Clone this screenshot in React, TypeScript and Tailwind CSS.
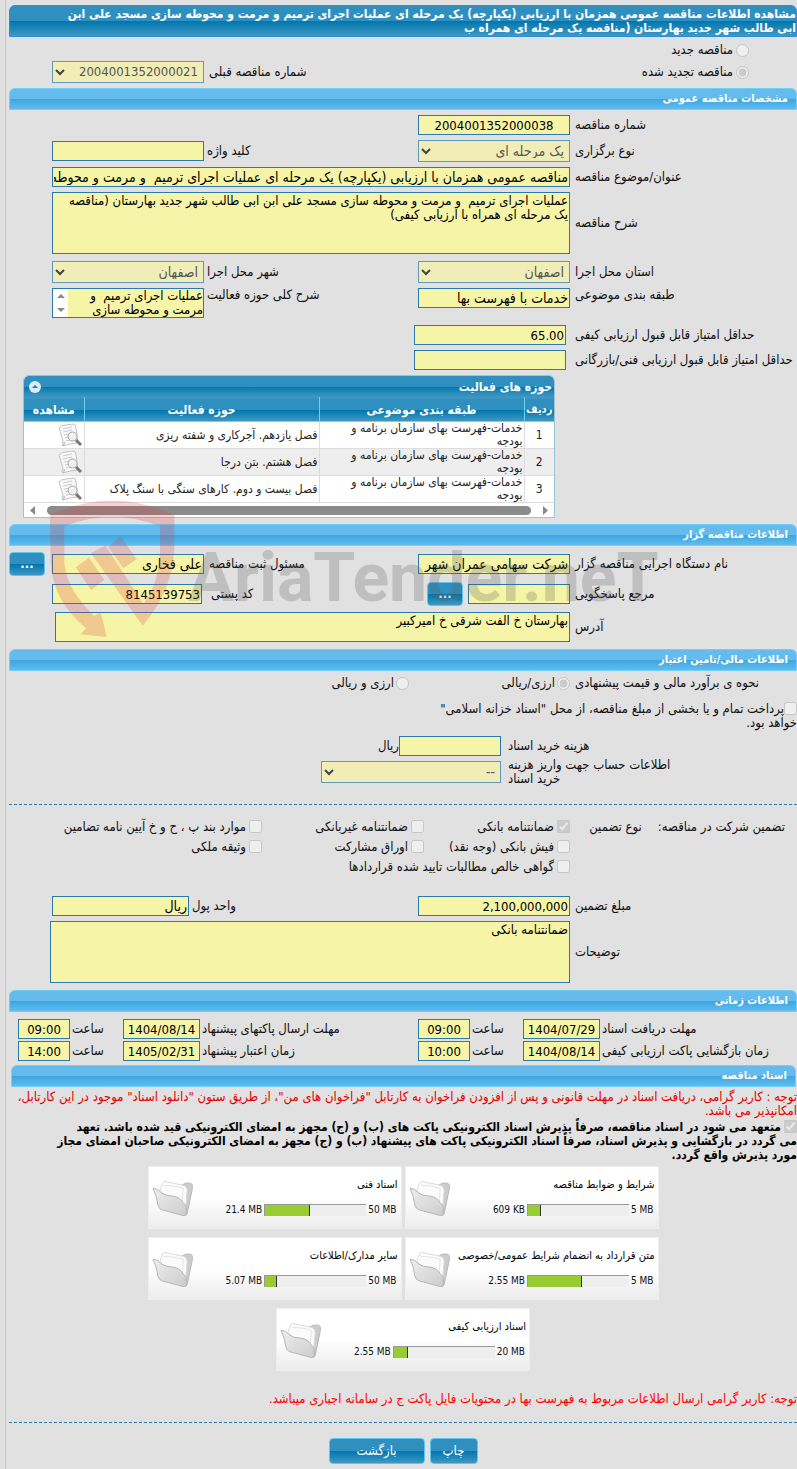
import type { ReactNode } from "react";
import clsx from "clsx";

const inputCls = "block h-5 w-full min-w-0 rounded-none border border-[#2a7aad] bg-[#f6f4a6] px-px py-0 text-black outline-none"
const fieldCls = clsx(inputCls, "text-[13px]")
const textFieldCls = clsx(inputCls, "text-[14px]")
const areaCls = "block w-full min-w-0 resize-none overflow-hidden rounded-none border border-[#2a7aad] bg-[#f6f4a6] px-px py-px text-[13px] leading-[14px] text-black outline-none"
const darkCls = "bg-[linear-gradient(#2f90bf_0%,#2f90bf_50%,#0076ae_50%,#3f98c2_100%)]"
const rowCls = "grid grid-cols-[227px_152px_1fr_152px_43px] items-center"

const activities = [
    { id: 1, activity: "فصل یازدهم. آجرکاری و شفته ریزی" },
    { id: 2, activity: "فصل هشتم. بتن درجا" },
    { id: 3, activity: "فصل بیست و دوم. کارهای سنگی با سنگ پلاک" },
]

const documents = [
    { title: "شرایط و ضوابط مناقصه", used: "609 KB", total: "5 MB", percent: 13 },
    { title: "اسناد فنی", used: "21.4 MB", total: "50 MB", percent: 44 },
    { title: "متن قرارداد به انضمام شرایط عمومی/خصوصی", used: "2.55 MB", total: "5 MB", percent: 53 },
    { title: "سایر مدارک/اطلاعات", used: "5.07 MB", total: "50 MB", percent: 12 },
    { title: "اسناد ارزیابی کیفی", used: "2.55 MB", total: "20 MB", percent: 14 },
]

function SectionTitle({ children, className }: { children: ReactNode, className?: string }) {
    return (
        <h2 className={clsx("h-[22px] rounded-t-md border border-[#6fd0fa] bg-[linear-gradient(#65bbeb_0%,#65bbeb_50%,#3aa7e1_50%,#62bbee_100%)] px-2 text-[11px] font-bold leading-5 text-white", className)}>
            {children}
        </h2>
    )
}

function Label({ htmlFor, children, className }: { htmlFor: string, children: ReactNode, className?: string }) {
    return (
        <label htmlFor={htmlFor} className={clsx("whitespace-nowrap text-left", className || "pl-[5px]")}>{children}</label>
    )
}

function SelectBox({ id, value, className }: { id: string, value: string, className?: string }) {
    return (
        <div className={clsx("relative", className || "text-[14px]")}>
            <select id={id} disabled className="block h-[22px] w-full appearance-none rounded-none border border-[#6199b9] bg-[#f0eeb6] pr-[5px] pl-5 py-0 text-[#555] opacity-100">
                <option>{value}</option>
            </select>
            <svg className="pointer-events-none absolute left-[3px] top-[7px]" width="10" height="8" viewBox="0 0 10 8" fill="none" stroke="#444" strokeWidth="2">
                <path d="M1 2l4 4 4-4" />
            </svg>
        </div>
    )
}

function BlueButton({ children, className, label }: { children: ReactNode, className?: string, label?: string }) {
    return (
        <button type="button" aria-label={label} className={clsx("rounded border border-[#5cc5f0] text-[13px] text-white", darkCls, className)}>
            {children}
        </button>
    )
}

function Check({ id, children, checked }: { id: string, children: ReactNode, checked?: boolean }) {
    return (
        <div className="flex h-5 items-start gap-[3px] whitespace-nowrap">
            <input id={id} type="checkbox" disabled defaultChecked={checked} className="m-0 size-[13px]" />
            <label htmlFor={id}>{children}</label>
        </div>
    )
}

function ViewIcon() {
    return (
        <svg width="24" height="24" viewBox="0 0 24 24" fill="none">
            <path d="M1 5Q3 2 8 2L15 1q3 0 3 4l2 15Q14 20 5 23Q3 21 5 18Z" fill="#f8f8f8" stroke="#c2c2c2" />
            <path d="M5 6l9-2M5 9l9-2M6 12l5-1M7 15l3-1M8 18l5-1" stroke="#ccc" />
            <path d="M5 23q2-2 1-4" stroke="#aaa" />
            <circle cx="14.5" cy="13.5" r="4.500" fill="#eee" stroke="#a8a8a8" />
            <path d="M12 13q1-2 3-2" stroke="#fff" />
            <path d="M18 17l5 5" stroke="#777" strokeWidth="3" />
        </svg>
    )
}

function FolderIcon() {
    return (
        <svg width="42" height="38" viewBox="-1 0 43 38">
            <defs>
                <linearGradient id="front" x1="0" y1="0" x2="1" y2="1">
                    <stop offset="0" stopColor="#eee" />
                    <stop offset="1" stopColor="#cdcdcd" />
                </linearGradient>
            </defs>
            <path d="M29 6l4-2q6-1 7 1 1 3 0 6L35 35l-2 2z" fill="#ccc" stroke="#b8b8b8" />
            <path d="M7 11L10 3q1-1 2-1l19 4q4 1 4 5l-2 24-10-8z" fill="#fbfbfb" stroke="#dadada" />
            <path d="M11 6q10 0 20 3l-1 13" fill="none" stroke="#e4e4e4" />
            <path d="M0 9q5 0 9 5 4 3 11 3 8 1 11 7 3 2 3 5v7q-1 1-3 1L9 31q-3-1-4-5Q4 17 0 9z" fill="url(#front)" stroke="#b4b4b4" />
        </svg>
    )
}

function Watermark() {
    return (
        <svg aria-hidden="true" className="pointer-events-none absolute -top-6 left-[41px]" width="610" height="140" viewBox="150 0 1830 420">
            <g fill="rgb(215,60,65)" fillOpacity="0.23">
                <path fillRule="evenodd" d="M150 45Q336-42 523 45V140Q520 270 428 377L273 160l43-24L430 312Q480 245 480 150V78Q336 24 193 78V190Q200 270 283 348L302 335l18 76-78-8 16-18Q155 300 152 180Z" />
                <path d="M324 140l38-32 48 70-40 27zM227 202l40-29 46 67-40 30z" />
            </g>
            <text direction="ltr" x="565" y="303" fill="rgb(90,90,90)" fillOpacity="0.25" fontFamily="Roboto, sans-serif" fontWeight="700" fontSize="204">AriaTender.neT</text>
        </svg>
    )
}

function ActivityTable() {
    return (
        <div className="mt-[5px] mr-[242px] ml-3.5 overflow-hidden rounded-t-md border border-[#9cc3dc] bg-white text-[12px] text-[#222]">
            <div className={clsx("flex h-[21px] items-center justify-between pr-0.5 pl-[5px] font-bold text-white", darkCls)}>
                <span>حوزه های فعالیت</span>
                <button type="button" aria-label="بستن" className="flex size-3 items-center justify-center rounded-full bg-[#dcebfa]">
                    <svg width="8" height="5" viewBox="0 0 8 5"><path d="M1 4l3-3 3 3z" fill="#1c7bb0" /></svg>
                </button>
            </div>
            <table className="w-full table-fixed border-collapse">
                <thead>
                    <tr className={clsx("h-6 border-t border-b border-t-[#3f8fd0] border-b-[#6fd0fa] text-white", darkCls)}>
                        <th className="w-[30px] border-l border-[#6fd0fa] p-0 text-[11px]">ردیف</th>
                        <th className="w-[205px] border-l border-[#6fd0fa] p-0">طبقه بندی موضوعی</th>
                        <th className="border-l border-[#6fd0fa] p-0">حوزه فعالیت</th>
                        <th className="w-[60px] p-0">مشاهده</th>
                    </tr>
                </thead>
                <tbody>
                    {activities.map((item) => (
                        <tr key={item.id} className="h-[27px] border-b border-[#ddd] even:bg-[#eee]">
                            <td className="border-l border-[#ddd] p-0 text-center">{item.id}</td>
                            <td className="border-l border-[#ddd] p-0 pr-px leading-[13px]">خدمات-فهرست بهای سازمان برنامه و<br />بودجه</td>
                            <td className="border-l border-[#ddd] p-0 pr-px leading-[13px]">{item.activity}</td>
                            <td className="p-0 pr-0.5"><ViewIcon /></td>
                        </tr>
                    ))}
                </tbody>
            </table>
            <div className="flex h-3.5 items-center justify-between px-1.5">
                <svg width="5" height="9" viewBox="0 0 5 9"><path d="M0 0l5 4.500-5 4.500z" fill="#888" /></svg>
                <div className="mx-3 h-[9px] flex-1 rounded-full bg-[#8b8b8b]"></div>
                <svg width="5" height="9" viewBox="0 0 5 9"><path d="M5 0L0 4.500 5 9z" fill="#888" /></svg>
            </div>
        </div>
    )
}

function DocumentCard({ title, used, total, percent }: { title: string, used: string, total: string, percent: number }) {
    return (
        <div className="flex h-[63px] w-[254px] items-center justify-between border border-[#eee] bg-linear-to-b from-white from-50% to-[#ececec] pr-[3px] pl-[3px]">
            <div className="flex w-0 flex-col gap-[11px] whitespace-nowrap text-[10px]">
                <a href="#" className="text-[11px] text-black">{title}</a>
                <div className="flex items-center gap-0.5">
                    <span dir="ltr" className="pr-px">{total}</span>
                    <div className="flex h-3 w-[102px] shrink-0 justify-end border-t border-l border-[#999] bg-[#eee]">
                        <div className="h-full border-r border-[#333] bg-[#9c3]" style={{ width: `${percent}%` }}></div>
                    </div>
                    <span dir="ltr">{used}</span>
                </div>
            </div>
            <FolderIcon />
        </div>
    )
}

export default function App() {
    return (
        <div dir="rtl" className="min-h-screen overflow-hidden bg-[#e1e1e1] pl-[5px] font-['DejaVu_Sans_Condensed','DejaVu_Sans',sans-serif] text-[13px] leading-[14px] text-[#111]">
            <main className="min-h-screen border-l border-[#c8c8c8] pt-[5px] pb-[5px] pl-[3px]">
                <h1 className={clsx("h-8 rounded-t-md border border-[#2b8fdc] py-px text-[12px] font-bold leading-[14px] text-white whitespace-nowrap", darkCls)}>
                    مشاهده اطلاعات مناقصه عمومی همزمان با ارزیابی (یکپارچه) یک مرحله ای عملیات اجرای ترمیم و مرمت و محوطه سازی مسجد علی ابن<br />
                    ابی طالب شهر جدید بهارستان (مناقصه یک مرحله ای همراه ب
                </h1>

                <div className="mt-1.5 flex items-center gap-[3px] pr-12">
                    <input id="new" name="kind" type="radio" disabled className="m-0 size-[13px]" />
                    <label htmlFor="new">مناقصه جدید</label>
                </div>
                <div className={clsx("mt-1", rowCls)}>
                    <div className="flex items-center gap-[3px] pr-12">
                        <input id="renewed" name="kind" type="radio" disabled defaultChecked className="m-0 size-[13px]" />
                        <label htmlFor="renewed">مناقصه تجدید شده</label>
                    </div>
                    <span></span>
                    <Label htmlFor="prev">شماره مناقصه قبلی</Label>
                    <SelectBox id="prev" value="2004001352000021" className="text-[13px]" />
                </div>

                <SectionTitle className="mt-[5px]">مشخصات مناقصه عمومی</SectionTitle>
                <div className="flex flex-col gap-[5px] pt-[5px]">
                    <div className={rowCls}>
                        <Label htmlFor="number">شماره مناقصه</Label>
                        <input id="number" readOnly defaultValue="2004001352000038" className={clsx(fieldCls, "text-center")} />
                    </div>
                    <div className={rowCls}>
                        <Label htmlFor="type">نوع برگزاری</Label>
                        <SelectBox id="type" value="یک مرحله ای" />
                        <Label htmlFor="keyword" className="pl-[3px]">کلید واژه</Label>
                        <input id="keyword" readOnly className={fieldCls} />
                    </div>
                    <div className={rowCls}>
                        <Label htmlFor="subject">عنوان/موضوع مناقصه</Label>
                        <input id="subject" readOnly defaultValue="مناقصه عمومی همزمان با ارزیابی (یکپارچه) یک مرحله ای عملیات اجرای ترمیم  و مرمت و محوطه سازی مسجد" className={clsx(textFieldCls, "col-span-3")} />
                    </div>
                    <div className={rowCls}>
                        <Label htmlFor="desc">شرح مناقصه</Label>
                        <textarea id="desc" readOnly className={clsx(areaCls, "col-span-3 h-[62px]")} defaultValue={"عملیات اجرای ترمیم  و مرمت و محوطه سازی مسجد علی ابن ابی طالب شهر جدید بهارستان (مناقصه\nیک مرحله ای همراه با ارزیابی کیفی)"} />
                    </div>
                    <div className={clsx(rowCls, "mt-0.5")}>
                        <Label htmlFor="province">استان محل اجرا</Label>
                        <SelectBox id="province" value="اصفهان" />
                        <Label htmlFor="city" className="pl-[3px]">شهر محل اجرا</Label>
                        <SelectBox id="city" value="اصفهان" />
                    </div>
                    <div className="grid grid-cols-[227px_152px_1fr_152px_43px] items-start">
                        <Label htmlFor="category">طبقه بندی موضوعی</Label>
                        <input id="category" readOnly defaultValue="خدمات با فهرست بها" className={textFieldCls} />
                        <Label htmlFor="scope" className="pl-[3px]">شرح کلی حوزه فعالیت</Label>
                        <div className="flex h-[30px] border border-[#2a7aad] bg-[#f6f4a6]">
                            <textarea id="scope" readOnly className="block min-w-0 flex-1 resize-none overflow-hidden p-0 text-[13px] leading-[14px] text-black outline-none whitespace-pre" defaultValue={"عملیات اجرای ترمیم  و\nمرمت و محوطه سازی"} />
                            <div className="flex w-[15px] flex-col items-center justify-between bg-white py-[5px]">
                                <svg width="8" height="4" viewBox="0 0 8 4"><path d="M0 4l4-4 4 4z" fill="#888" /></svg>
                                <svg width="8" height="4" viewBox="0 0 8 4"><path d="M0 0l4 4 4-4z" fill="#888" /></svg>
                            </div>
                        </div>
                    </div>
                    <div className="mt-0.5 flex items-center">
                        <Label htmlFor="quality" className="w-[231px] pl-[9px]">حداقل امتیاز قابل قبول ارزیابی کیفی</Label>
                        <div className="w-[152px]"><input id="quality" readOnly defaultValue="65.00" className={fieldCls} /></div>
                    </div>
                    <div className="flex items-center">
                        <Label htmlFor="technical" className="w-[231px] pl-[9px]">حداقل امتیاز قابل قبول ارزیابی فنی/بازرگانی</Label>
                        <div className="w-[152px]"><input id="technical" readOnly className={fieldCls} /></div>
                    </div>
                </div>

                <ActivityTable />

                <section className="relative mt-1.5">
                    <SectionTitle>اطلاعات مناقصه گزار</SectionTitle>
                    <div className="flex flex-col gap-1.5 pt-1.5">
                        <div className={rowCls}>
                            <Label htmlFor="org">نام دستگاه اجرایی مناقصه گزار</Label>
                            <input id="org" readOnly defaultValue="شرکت سهامی عمران شهر جدید بهارستان" className={textFieldCls} />
                            <Label htmlFor="registrar">مسئول ثبت مناقصه</Label>
                            <input id="registrar" readOnly defaultValue="علی فخاری" className={textFieldCls} />
                            <BlueButton label="انتخاب مسئول" className="mr-[7px] h-6 w-9 font-bold">...</BlueButton>
                        </div>
                        <div className={rowCls}>
                            <Label htmlFor="contact">مرجع پاسخگویی</Label>
                            <div className="flex items-center gap-[5px]">
                                <div className="w-[102px]"><input id="contact" readOnly className={fieldCls} /></div>
                                <BlueButton label="انتخاب مرجع" className="h-6 w-9 font-bold">...</BlueButton>
                            </div>
                            <Label htmlFor="postal" className="pl-[7px]">کد پستی</Label>
                            <div className="pr-0.5"><input id="postal" readOnly defaultValue="8145139753" className={fieldCls} /></div>
                        </div>
                        <div className={rowCls}>
                            <Label htmlFor="address">آدرس</Label>
                            <div className="col-span-3 pl-[3px]">
                                <textarea id="address" readOnly className={clsx(areaCls, "h-[30px]")} defaultValue="بهارستان خ الفت شرقی خ امیرکبیر" />
                            </div>
                        </div>
                    </div>
                    <Watermark />
                </section>

                <SectionTitle className="mt-[7px]">اطلاعات مالی/تامین اعتبار</SectionTitle>
                <div className="flex items-center pt-[5px]">
                    <span className="w-[227px] pl-[5px] text-left whitespace-nowrap">نحوه ی برآورد مالی و قیمت پیشنهادی</span>
                    <div className="flex w-[161px] items-center gap-0.5">
                        <input id="rial" name="currency" type="radio" disabled defaultChecked className="m-0 size-[13px]" />
                        <label htmlFor="rial">ارزی/ریالی</label>
                    </div>
                    <div className="flex items-center gap-0.5">
                        <input id="both" name="currency" type="radio" disabled className="m-0 size-[13px]" />
                        <label htmlFor="both">ارزی و ریالی</label>
                    </div>
                </div>
                <div className="mt-3 w-[372px]">
                    <input id="treasury" type="checkbox" disabled className="m-0 size-[13px] align-top" />
                    <label htmlFor="treasury">پرداخت تمام و یا بخشی از مبلغ مناقصه، از محل "اسناد خزانه اسلامی" خواهد بود.</label>
                </div>
                <div className="mt-1.5 flex items-center">
                    <Label htmlFor="cost" className="w-[296px] pl-[7px]">هزینه خرید اسناد</Label>
                    <div className="w-[102px]"><input id="cost" readOnly className={fieldCls} /></div>
                    <span>ریال</span>
                </div>
                <div className="mt-0.5 flex items-center">
                    <div className="flex w-[296px] justify-end pl-[7px]">
                        <label htmlFor="account" className="whitespace-nowrap text-left">اطلاعات حساب جهت واریز هزینه<br />خرید اسناد</label>
                    </div>
                    <SelectBox id="account" value="--" className="w-[180px] text-[14px]" />
                </div>

                <hr className="mt-[18px] border-t border-dashed border-[#2a7aad]" />
                <div className="mt-[15px] grid grid-cols-[227px_146px_162px_1fr]">
                    <div className="flex gap-4 pr-3 whitespace-nowrap">
                        <span>تضمین شرکت در مناقصه:</span>
                        <span>نوع تضمین</span>
                    </div>
                    <Check id="g1" checked>ضمانتنامه بانکی</Check>
                    <Check id="g2">ضمانتنامه غیربانکی</Check>
                    <Check id="g3">موارد بند پ ، ح و خ آیین نامه تضامین</Check>
                    <div className="col-start-2"><Check id="g4">فیش بانکی (وجه نقد)</Check></div>
                    <Check id="g5">اوراق مشارکت</Check>
                    <Check id="g6">وثیقه ملکی</Check>
                    <div className="col-start-2"><Check id="g7">گواهی خالص مطالبات تایید شده قراردادها</Check></div>
                </div>
                <div className="mt-4 flex flex-col gap-[5px]">
                    <div className="grid grid-cols-[227px_152px_1fr_137px_43px] items-center">
                        <Label htmlFor="amount">مبلغ تضمین</Label>
                        <input id="amount" readOnly defaultValue="2,100,000,000" className={fieldCls} />
                        <Label htmlFor="unit" className="pl-[3px]">واحد پول</Label>
                        <input id="unit" readOnly defaultValue="ریال" className={textFieldCls} />
                    </div>
                    <div className="grid grid-cols-[227px_1fr_41px] items-center">
                        <Label htmlFor="notes">توضیحات</Label>
                        <textarea id="notes" readOnly className={clsx(areaCls, "h-[62px]")} defaultValue="ضمانتنامه بانکی" />
                    </div>
                </div>

                <SectionTitle className="mt-[7px]">اطلاعات زمانی</SectionTitle>
                <div className="mt-[7px] grid grid-cols-[197px_77px_53px_52px_1fr_77px_53px_52px_9px] items-center gap-y-0.5">
                    <Label htmlFor="d1" className="pl-0.5">مهلت دریافت اسناد</Label>
                    <input id="d1" readOnly defaultValue="1404/07/29" className={clsx(fieldCls, "text-center")} />
                    <Label htmlFor="t1" className="pl-0.5">ساعت</Label>
                    <input id="t1" readOnly defaultValue="09:00" className={clsx(fieldCls, "text-center")} />
                    <Label htmlFor="d2" className="pl-0.5">مهلت ارسال پاکتهای پیشنهاد</Label>
                    <input id="d2" readOnly defaultValue="1404/08/14" className={clsx(fieldCls, "text-center")} />
                    <Label htmlFor="t2" className="pl-0.5">ساعت</Label>
                    <input id="t2" readOnly defaultValue="09:00" className={clsx(fieldCls, "text-center")} />
                    <span></span>
                    <Label htmlFor="d3" className="pl-0.5">زمان بازگشایی پاکت ارزیابی کیفی</Label>
                    <input id="d3" readOnly defaultValue="1404/08/14" className={clsx(fieldCls, "text-center")} />
                    <Label htmlFor="t3" className="pl-0.5">ساعت</Label>
                    <input id="t3" readOnly defaultValue="10:00" className={clsx(fieldCls, "text-center")} />
                    <Label htmlFor="d4" className="pl-0.5">زمان اعتبار پیشنهاد</Label>
                    <input id="d4" readOnly defaultValue="1405/02/31" className={clsx(fieldCls, "text-center")} />
                    <Label htmlFor="t4" className="pl-0.5">ساعت</Label>
                    <input id="t4" readOnly defaultValue="14:00" className={clsx(fieldCls, "text-center")} />
                </div>

                <SectionTitle className="mt-1 mr-px ml-0.5">اسناد مناقصه</SectionTitle>
                <p className="mt-[3px] whitespace-nowrap text-[#e00000]">
                    توجه : کاربر گرامی، دریافت اسناد در مهلت قانونی و پس از افزودن فراخوان به کارتابل "فراخوان های من"، از طریق ستون "دانلود اسناد" موجود در این کارتابل،<br />
                    امکانپذیر می باشد.
                </p>
                <div className="mt-0.5 whitespace-nowrap text-[12px] font-bold text-black">
                    <input id="commit" type="checkbox" disabled defaultChecked className="m-0 ml-[3px] size-[13px] align-top" />
                    <label htmlFor="commit">
                        متعهد می شود در اسناد مناقصه، صرفاً پذیرش اسناد الکترونیکی پاکت های (ب) و (ج) مجهز به امضای الکترونیکی قید شده باشد. تعهد<br />
                        می گردد در بازگشایی و پذیرش اسناد، صرفاً اسناد الکترونیکی پاکت های پیشنهاد (ب) و (ج) مجهز به امضای الکترونیکی صاحبان امضای مجاز<br />
                        مورد پذیرش واقع گردد.
                    </label>
                </div>

                <div className="mx-auto mt-1 flex w-[520px] flex-wrap justify-center gap-x-[3px] gap-y-2">
                    {documents.map((doc) => (
                        <DocumentCard key={doc.title} {...doc} />
                    ))}
                </div>

                <p className="mt-[21px] text-[#f00]">توجه: کاربر گرامی ارسال اطلاعات مربوط به فهرست بها در محتویات فایل پاکت ج در سامانه اجباری میباشد.</p>
                <hr className="mt-4 border-t border-dashed border-[#2a7aad]" />
                <div className="mt-[15px] flex justify-center gap-[5px]">
                    <BlueButton className="h-[26px] w-12">چاپ</BlueButton>
                    <BlueButton className="h-[26px] w-24">بازگشت</BlueButton>
                </div>
            </main>
        </div>
    );
}
